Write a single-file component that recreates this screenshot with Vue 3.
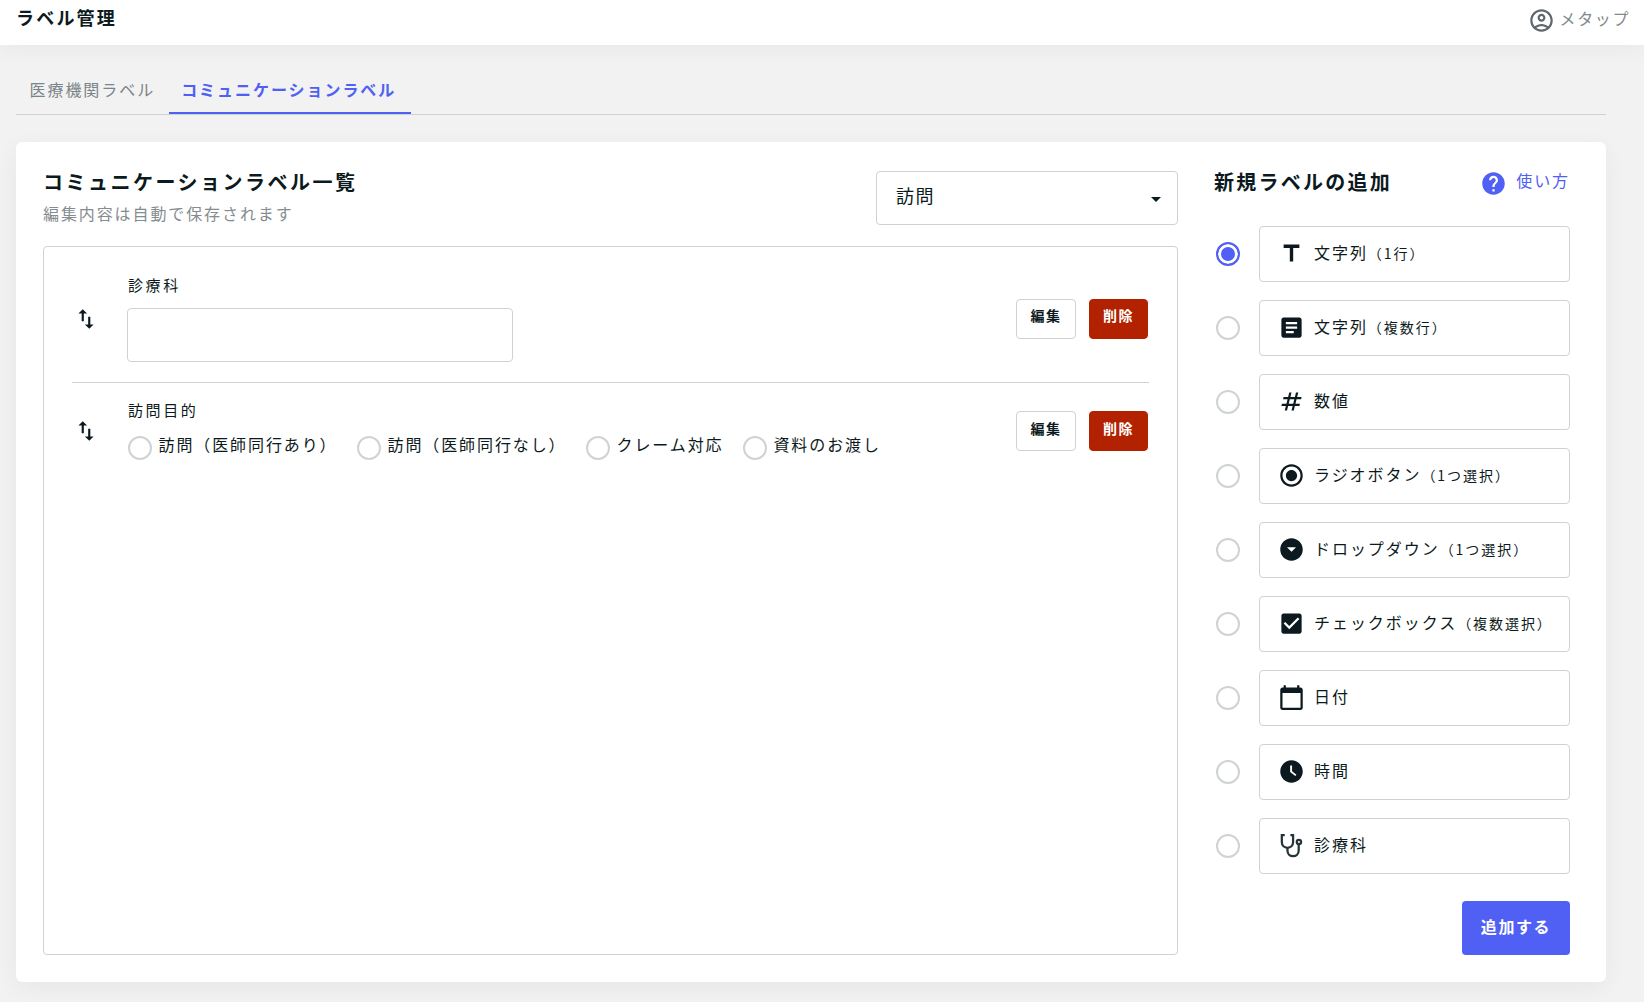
<script setup>
const icons = {
  text: 'M5 4v3h5.5v12h3V7H19V4z',
  article: 'M19 3H5c-1.1 0-2 .9-2 2v14c0 1.1.9 2 2 2h14c1.1 0 2-.9 2-2V5c0-1.1-.9-2-2-2zm-5 14H7v-2h7v2zm3-4H7v-2h10v2zm0-4H7V7h10v2z',
  hash: 'M20.5 10l.5-2h-4l1-4h-2l-1 4h-4l1-4h-2L9 8H5l-.5 2h4l-1 4h-4L3 16h4l-1 4h2l1-4h4l-1 4h2l1-4h4l.5-2h-4l1-4h4zm-7 4h-4l1-4h4l-1 4z',
  radio: 'M12 7c-2.76 0-5 2.24-5 5s2.24 5 5 5 5-2.24 5-5-2.24-5-5-5zm0-5C6.48 2 2 6.48 2 12s4.48 10 10 10 10-4.48 10-10S17.52 2 12 2zm0 18c-4.42 0-8-3.58-8-8s3.58-8 8-8 8 3.58 8 8-3.58 8-8 8z',
  drop: 'M12 2C6.48 2 2 6.48 2 12s4.48 10 10 10 10-4.48 10-10S17.52 2 12 2zm0 12l-4-4h8l-4 4z',
  check: 'M19 3H5c-1.11 0-2 .9-2 2v14c0 1.1.89 2 2 2h14c1.11 0 2-.9 2-2V5c0-1.1-.89-2-2-2zm-9 14l-5-5 1.41-1.41L10 14.17l7.59-7.59L19 8l-9 9z',
  date: 'M20 3h-1V1h-2v2H7V1H5v2H4c-1.1 0-2 .9-2 2v16c0 1.1.9 2 2 2h16c1.1 0 2-.9 2-2V5c0-1.1-.9-2-2-2zm0 18H4V8h16v13z',
  time: 'M12 2C6.5 2 2 6.5 2 12s4.5 10 10 10 10-4.5 10-10S17.5 2 12 2zm3.4 14-4.6-3.6V6.6h1.7v5.1l3.9 3.2-1 1.1z'
}
const help = 'M12 2C6.48 2 2 6.48 2 12s4.48 10 10 10 10-4.48 10-10S17.52 2 12 2zm1 17h-2v-2h2v2zm2.07-7.75l-.9.92C13.45 12.9 13 13.5 13 15h-2v-.5c0-1.1.45-2.1 1.17-2.83l1.24-1.26c.37-.36.59-.86.59-1.41 0-1.1-.9-2-2-2s-2 .9-2 2H8c0-2.21 1.79-4 4-4s4 1.79 4 4c0 .88-.36 1.68-.93 2.25z'
const account = 'M12 2C6.48 2 2 6.48 2 12s4.48 10 10 10 10-4.48 10-10S17.52 2 12 2zM7.35 18.5C8.66 17.56 10.26 17 12 17s3.34.56 4.65 1.5c-1.31.94-2.91 1.5-4.65 1.5s-3.34-.56-4.65-1.5zm10.79-1.38C16.45 15.8 14.32 15 12 15s-4.45.8-6.14 2.12C4.7 15.73 4 13.95 4 12c0-4.42 3.58-8 8-8s8 3.58 8 8c0 1.95-.7 3.73-1.86 5.12zM12 6c-1.93 0-3.5 1.57-3.5 3.5S10.07 13 12 13s3.5-1.57 3.5-3.5S13.93 6 12 6zm0 5c-.83 0-1.5-.67-1.5-1.5S11.17 8 12 8s1.5.67 1.5 1.5S12.83 11 12 11z'
const sort = 'M9 3L5 6.99h3V14h2V6.99h3L9 3zm7 14.01V10h-2v7.01h-3L15 21l4-3.99h-3z'

const options = [
  { icon: 'text', label: '文字列', note: '（1行）', selected: true },
  { icon: 'article', label: '文字列', note: '（複数行）' },
  { icon: 'hash', label: '数値' },
  { icon: 'radio', label: 'ラジオボタン', note: '（1つ選択）' },
  { icon: 'drop', label: 'ドロップダウン', note: '（1つ選択）' },
  { icon: 'check', label: 'チェックボックス', note: '（複数選択）' },
  { icon: 'date', label: '日付' },
  { icon: 'time', label: '時間' },
  { icon: 'steth', label: '診療科' }
]
const purposes = ['訪問（医師同行あり）', '訪問（医師同行なし）', 'クレーム対応', '資料のお渡し']
</script>

<template>
  <div class="page">
    <header class="topbar">
      <h1 class="app-title">ラベル管理</h1>
      <div class="user">
        <svg class="user-icon" viewBox="0 0 24 24"><path :d="account" /></svg>
        <span class="user-name">メタップ</span>
      </div>
    </header>

    <main class="main">
      <nav class="tabs">
        <div class="tab">医療機関ラベル</div>
        <div class="tab active">コミュニケーションラベル</div>
      </nav>

      <section class="card">
        <div class="left">
          <div class="left-head">
            <div>
              <h2 class="heading">コミュニケーションラベル一覧</h2>
              <p class="sub">編集内容は自動で保存されます</p>
            </div>
            <div class="select">
              <span>訪問</span>
              <i class="caret"></i>
            </div>
          </div>

          <div class="list">
            <div class="row row-first">
              <svg class="sort" viewBox="0 0 24 24"><path :d="sort" /></svg>
              <div class="field">
                <div class="field-label">診療科</div>
                <div class="input"></div>
              </div>
              <div class="actions">
                <button class="btn edit">編集</button>
                <button class="btn del">削除</button>
              </div>
            </div>
            <div class="row row-second">
              <svg class="sort" viewBox="0 0 24 24"><path :d="sort" /></svg>
              <div class="field">
                <div class="field-label">訪問目的</div>
                <div class="choices">
                  <label v-for="p in purposes" :key="p" class="choice">
                    <span class="circle"></span>
                    <span class="choice-text">{{ p }}</span>
                  </label>
                </div>
              </div>
              <div class="actions">
                <button class="btn edit">編集</button>
                <button class="btn del">削除</button>
              </div>
            </div>
          </div>
        </div>

        <aside class="right">
          <div class="right-head">
            <h2 class="heading">新規ラベルの追加</h2>
            <div class="help">
              <svg class="help-icon" viewBox="0 0 24 24"><path :d="help" /></svg>
              <span class="help-text">使い方</span>
            </div>
          </div>

          <div class="options">
            <div v-for="(o, i) in options" :key="i" class="option">
              <span class="circle" :class="{ on: o.selected }"></span>
              <div class="option-box">
                <svg v-if="o.icon === 'steth'" class="opt-icon steth" viewBox="0 0 24 24">
                  <path d="M6 2.8H3.4v6.4c0 2.8 2.2 4.8 5 4.8s5-2 5-4.8V2.8H11" />
                  <path d="M8.4 14v2.5c0 3 2.2 5 5 5s5-2 5-5V10.8" />
                  <circle cx="18.6" cy="8.8" r="1.9" />
                </svg>
                <svg v-else class="opt-icon" viewBox="0 0 24 24"><path :d="icons[o.icon]" /></svg>
                <span class="opt-label">{{ o.label }}<small v-if="o.note">{{ o.note }}</small></span>
              </div>
            </div>
          </div>

          <div class="submit-row">
            <button class="submit">追加する</button>
          </div>
        </aside>
      </section>
    </main>
  </div>
</template>

<style>
html, body { margin: 0; background: #f2f2f2; }
</style>

<style scoped>
.page {
  height: 1002px;
  overflow: hidden;
  background: #f2f2f2;
  color: #0c1a20;
  font-family: "Noto Sans CJK JP", "Noto Sans", sans-serif;
  font-size: 16px;
  letter-spacing: 1.6px;
}
.topbar {
  height: 45px;
  box-sizing: border-box;
  padding: 0 16px;
  background: #fff;
  display: flex;
  align-items: flex-start;
  justify-content: space-between;
  box-shadow: 0 6px 20px rgba(0, 0, 0, 0.04);
}
.app-title {
  margin: 4px 0 0;
  font-size: 18px;
  line-height: 26px;
  font-weight: 700;
  letter-spacing: 2.2px;
}
.user {
  display: flex;
  align-items: center;
  margin: 6px -2px 0 0;
  color: #80888b;
  gap: 5px;
}
.user-name { line-height: 24px; padding-bottom: 4px; }
.user-icon { width: 27px; height: 27px; fill: #5f686c; }
.main { padding: 0 38px 0 16px; }
.tabs {
  display: flex;
  margin-top: 21px;
  height: 49px;
  box-sizing: border-box;
  border-bottom: 1px solid #cfd1d2;
}
.tab {
  height: 48px;
  box-sizing: border-box;
  padding: 9px 13.5px 0;
  line-height: 28px;
  color: #7b8488;
  letter-spacing: 1.95px;
}
.tab.active {
  padding: 9px 14.5px 0 12.5px;
  color: #5060f5;
  font-weight: 700;
  border-bottom: 2px solid #5060f5;
}
.card {
  margin-top: 27px;
  height: 840px;
  box-sizing: border-box;
  padding: 29px 36px 27px 27px;
  display: flex;
  gap: 38px;
  background: #fff;
  border-radius: 6px;
  box-shadow: 0 6px 24px rgba(0, 0, 0, 0.05);
}
.left {
  flex: 1;
  min-width: 0;
  display: flex;
  flex-direction: column;
}
.left-head {
  display: flex;
  justify-content: space-between;
  align-items: flex-start;
  height: 75px;
}
.heading {
  margin: 0 0 1px;
  font-size: 20px;
  line-height: 22px;
  font-weight: 700;
  letter-spacing: 2.5px;
}
.right-head .heading { letter-spacing: 2.25px; }
.sub {
  margin: 8px 0 0;
  line-height: 24px;
  color: #858c8f;
  letter-spacing: 1.9px;
}
.select {
  width: 302px;
  height: 54px;
  box-sizing: border-box;
  padding: 0 16px 6px 19px;
  display: flex;
  align-items: center;
  justify-content: space-between;
  border: 1px solid #cfd1d2;
  border-radius: 4px;
  font-size: 18px;
}
.caret {
  width: 0;
  height: 0;
  margin-top: 8px;
  border-left: 5px solid transparent;
  border-right: 5px solid transparent;
  border-top: 5px solid #0c1a20;
}
.list {
  flex: 1;
  box-sizing: border-box;
  padding: 0 28px;
  border: 1px solid #cfd1d2;
  border-radius: 4px;
}
.row {
  display: flex;
  align-items: center;
  padding: 0 1px 0 4px;
}
.row-first {
  padding-top: 26px;
  padding-bottom: 20px;
  border-bottom: 1px solid #cfd1d2;
}
.row-first .actions, .row-first .sort { margin-top: 2px; }
.row-second { padding-top: 17px; }
.row-second .field { margin-top: -2px; margin-bottom: 2px; }
.sort { width: 26px; height: 26px; fill: #0c1a20; flex: none; margin-left: -2.6px; }
.field { flex: 1; margin-left: 28.6px; }
.field-label { line-height: 24px; font-size: 15px; letter-spacing: 2.6px; }
.input {
  width: 386px;
  height: 54px;
  margin-top: 11px;
  margin-left: -1px;
  box-sizing: border-box;
  border: 1px solid #cfd1d2;
  border-radius: 4px;
}
.choices {
  display: flex;
  margin-top: 14px;
  gap: 19.5px;
}
.choice {
  display: flex;
  align-items: flex-start;
  gap: 6.5px;
}
.choice-text { line-height: 16px; letter-spacing: 1.9px; }
.circle {
  width: 24px;
  height: 24px;
  flex: none;
  box-sizing: border-box;
  border: 2px solid #cfd3d4;
  border-radius: 50%;
  background: #fff;
}
.circle.on {
  border-color: #5060f5;
  background: #5060f5;
  box-shadow: inset 0 0 0 3px #fff;
}
.actions { display: flex; gap: 13px; }
.btn {
  width: 60px;
  height: 40px;
  padding: 0 0 7px;
  box-sizing: border-box;
  border-radius: 4px;
  font: inherit;
  font-size: 14px;
  font-weight: 700;
  letter-spacing: 1.4px;
}
.edit { background: #fff; border: 1px solid #cfd1d2; color: #0c1a20; }
.del { width: 59px; background: #b22200; border: 1px solid #b22200; color: #fff; }
.right {
  width: 354px;
  flex: none;
  display: flex;
  flex-direction: column;
}
.right-head {
  height: 55px;
  margin-left: -2px;
  display: flex;
  justify-content: space-between;
  align-items: flex-start;
}
.help { display: flex; gap: 9px; }
.help-icon { width: 27px; height: 27px; margin-top: -1px; fill: #5060f5; flex: none; }
.help-text { color: #5060f5; line-height: 19px; letter-spacing: 1.9px; }
.options { display: flex; flex-direction: column; gap: 18px; }
.option { display: flex; align-items: center; gap: 19px; }
.option-box {
  flex: 1;
  height: 56px;
  box-sizing: border-box;
  padding: 0 0 4px 19.5px;
  display: flex;
  align-items: center;
  gap: 10px;
  border: 1px solid #cfd1d2;
  border-radius: 4px;
}
.opt-icon { width: 27px; height: 27px; margin: 3.5px -1px 0 -1.5px; fill: #0c1a20; flex: none; }
.steth { fill: none; stroke: #26343a; stroke-width: 2; }
.opt-label { line-height: 24px; white-space: nowrap; letter-spacing: 1.95px; }
.opt-label small { font-size: 14px; }
.submit-row { display: flex; justify-content: flex-end; margin-top: 27px; }
.submit {
  width: 108px;
  height: 54px;
  padding: 0 0 5px;
  border: 0;
  border-radius: 4px;
  background: #5060f5;
  color: #fff;
  font: inherit;
  font-weight: 700;
  letter-spacing: 1.6px;
}
</style>
